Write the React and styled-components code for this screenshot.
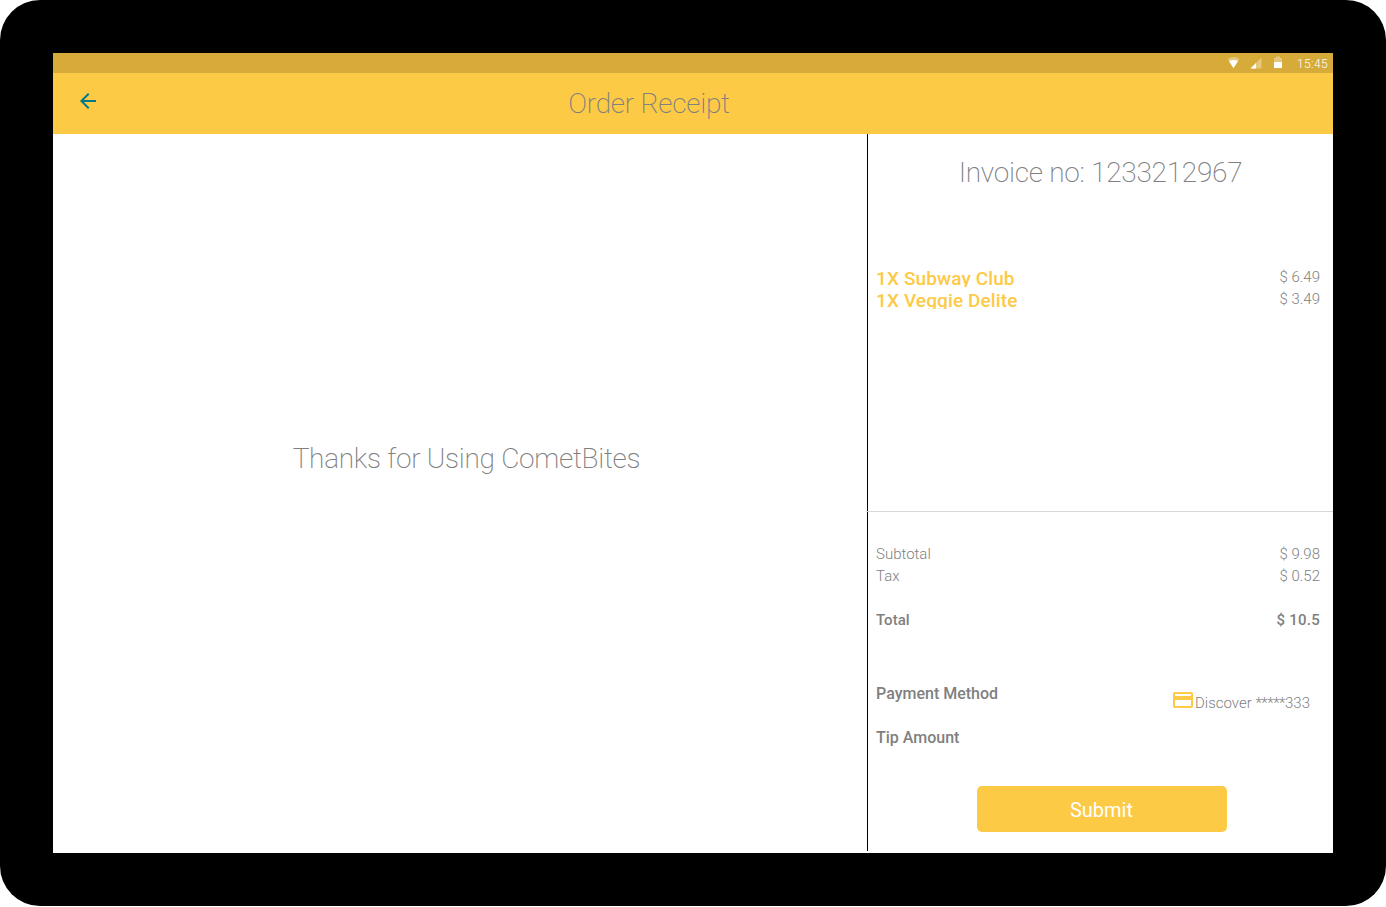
import React from 'react';
import styled, { createGlobalStyle } from 'styled-components';

const Global = createGlobalStyle`
  * { box-sizing: border-box; }
  body { margin: 0; background: #fff; font-family: Roboto, "Liberation Sans", sans-serif; color: #808080; }
`;
const Tablet = styled.div`
  width: 1386px;
  height: 906px;
  padding: 53px;
  background: #000;
  border-radius: 40px;
`;
const Screen = styled.main`
  display: flex;
  flex-direction: column;
  width: 1280px;
  height: 800px;
  background: #fff;
`;
const StatusBar = styled.div`
  display: flex;
  justify-content: flex-end;
  align-items: center;
  height: 20px;
  padding-right: 4px;
  background: #d7ab39;
  color: #fff;
`;
const StatusIcons = styled.svg`
  display: block;
  width: 68px;
  height: 20px;
  margin-right: 1px;
`;
const Clock = styled.span`
  width: 32px;
  padding-top: 1px;
  font-size: 12px;
  line-height: 20px;
  font-weight: 300;
  letter-spacing: 0.4px;
  white-space: nowrap;
`;
const Header = styled.header`
  display: grid;
  grid-template-columns: 70px 1052px 1fr;
  height: 61px;
  background: #fdca45;
`;
const BackButton = styled.button`
  height: 56px;
  padding: 0 0 0 23px;
  border: 0;
  background: none;
  svg { display: block; }
`;
const Title = styled.h1`
  margin: 0;
  padding-top: ${(p) => p.$top || 0}px;
  font-size: 28px;
  font-weight: 220;
  letter-spacing: -0.28px;
  line-height: 32px;
  text-align: center;
  white-space: nowrap;
`;
const Body = styled.div`
  display: flex;
  flex: 1;
`;
const Message = styled.section`
  width: 814px;
  padding: 309px 0 0 13px;
`;
const Invoice = styled.aside`
  width: 466px;
  height: 717px;
  border-left: 1px solid #000;
`;
const Items = styled.section`
  height: 378px;
  margin-left: -2px;
  padding-left: 2px;
  border-bottom: 1px solid #d8d8d8;
`;
const ItemList = styled.div`
  padding: 77px 13px 0 8px;
`;
const Row = styled.div`
  display: flex;
  justify-content: space-between;
  height: 22px;
  line-height: 22px;
  font-size: 15px;
  font-weight: ${(p) => (p.$strong ? 500 : 300)};
  margin-top: ${(p) => p.$gap || 0}px;
`;
const ItemName = styled.span`
  height: 21px;
  padding-top: 2px;
  overflow: hidden;
  color: #fdca45;
  font-size: 19px;
  font-weight: 500;
  letter-spacing: 0.12px;
`;
const Summary = styled.section`
  padding: 31px 13px 0 8px;
`;
const Total = styled.span`
  letter-spacing: 0.25px;
`;
const Label = styled.span`
  padding-top: 1px;
  font-size: 16px;
`;
const Card = styled.span`
  display: flex;
  padding-right: 10px;
  font-weight: 300;
  svg { display: block; margin-top: 6px; }
`;
const CardText = styled.span`
  padding-top: 10px;
`;
const Mask = styled.span`
  letter-spacing: -0.45px;
`;
const Submit = styled.button`
  display: block;
  width: 250px;
  height: 46px;
  margin: 38px 0 0 101px;
  padding: 1px 1px 0 0;
  border: 0;
  border-radius: 5px;
  background: #fdca45;
  color: #fff;
  font: 400 20px/45px Roboto, sans-serif;
  span { display: block; padding-top: 1px; }
`;

export default function App() {
  return (
    <>
      <Global />
      <Tablet>
        <Screen>
          <StatusBar>
            <StatusIcons viewBox="0 0 68 20">
              <path d="M-.5 6Q5.5 2 11.5 6L5.5 15Z" fill="#fff" opacity=".35" />
              <path d="M1 8Q5.5 6 10 8L5.5 15.3Z" fill="#fff" />
              <path d="M33.5 4.5V15.5H22.5Z" fill="#fff" opacity=".35" />
              <path d="M28 10V15.5H22.5Z" fill="#fff" />
              <path d="M46 5h2V3.5h4V5h2v4h-8Z" fill="#fff" opacity=".35" />
              <path d="M46 9h8v6h-8Z" fill="#fff" />
            </StatusIcons>
            <Clock>15:45</Clock>
          </StatusBar>
          <Header>
            <BackButton aria-label="Back">
              <svg width="24" height="24" viewBox="0 0 24 24" fill="#00798a">
                <path d="M20 11H7.83l5.59-5.59L12 4l-8 8 8 8 1.41-1.41L7.83 13H20z" />
              </svg>
            </BackButton>
            <Title $top={15}>Order Receipt</Title>
          </Header>
          <Body>
            <Message><Title>Thanks for Using CometBites</Title></Message>
            <Invoice>
              <Items>
                <Title $top={23}>Invoice no: 1233212967</Title>
                <ItemList>
                  <Row><ItemName>1X Subway Club</ItemName><span>$ 6.49</span></Row>
                  <Row><ItemName>1X Veggie Delite</ItemName><span>$ 3.49</span></Row>
                </ItemList>
              </Items>
              <Summary>
                <Row><span>Subtotal</span><span>$ 9.98</span></Row>
                <Row><span>Tax</span><span>$ 0.52</span></Row>
                <Row $strong $gap={22}><span>Total</span><Total>$ 10.5</Total></Row>
                <Row $strong $gap={51}>
                  <Label>Payment Method</Label>
                  <Card>
                    <svg width="24" height="24" viewBox="0 0 24 24" fill="#fdca45">
                      <path d="M20 4H4c-1.11 0-1.99.89-1.99 2L2 18c0 1.11.89 2 2 2h16c1.11 0 2-.89 2-2V6c0-1.11-.89-2-2-2zm0 14H4v-6h16v6zm0-10H4V6h16v2z" />
                    </svg>
                    <CardText>Discover <Mask>*****</Mask>333</CardText>
                  </Card>
                </Row>
                <Row $strong $gap={22}><Label>Tip Amount</Label></Row>
                <Submit><span>Submit</span></Submit>
              </Summary>
            </Invoice>
          </Body>
        </Screen>
      </Tablet>
    </>
  );
}
